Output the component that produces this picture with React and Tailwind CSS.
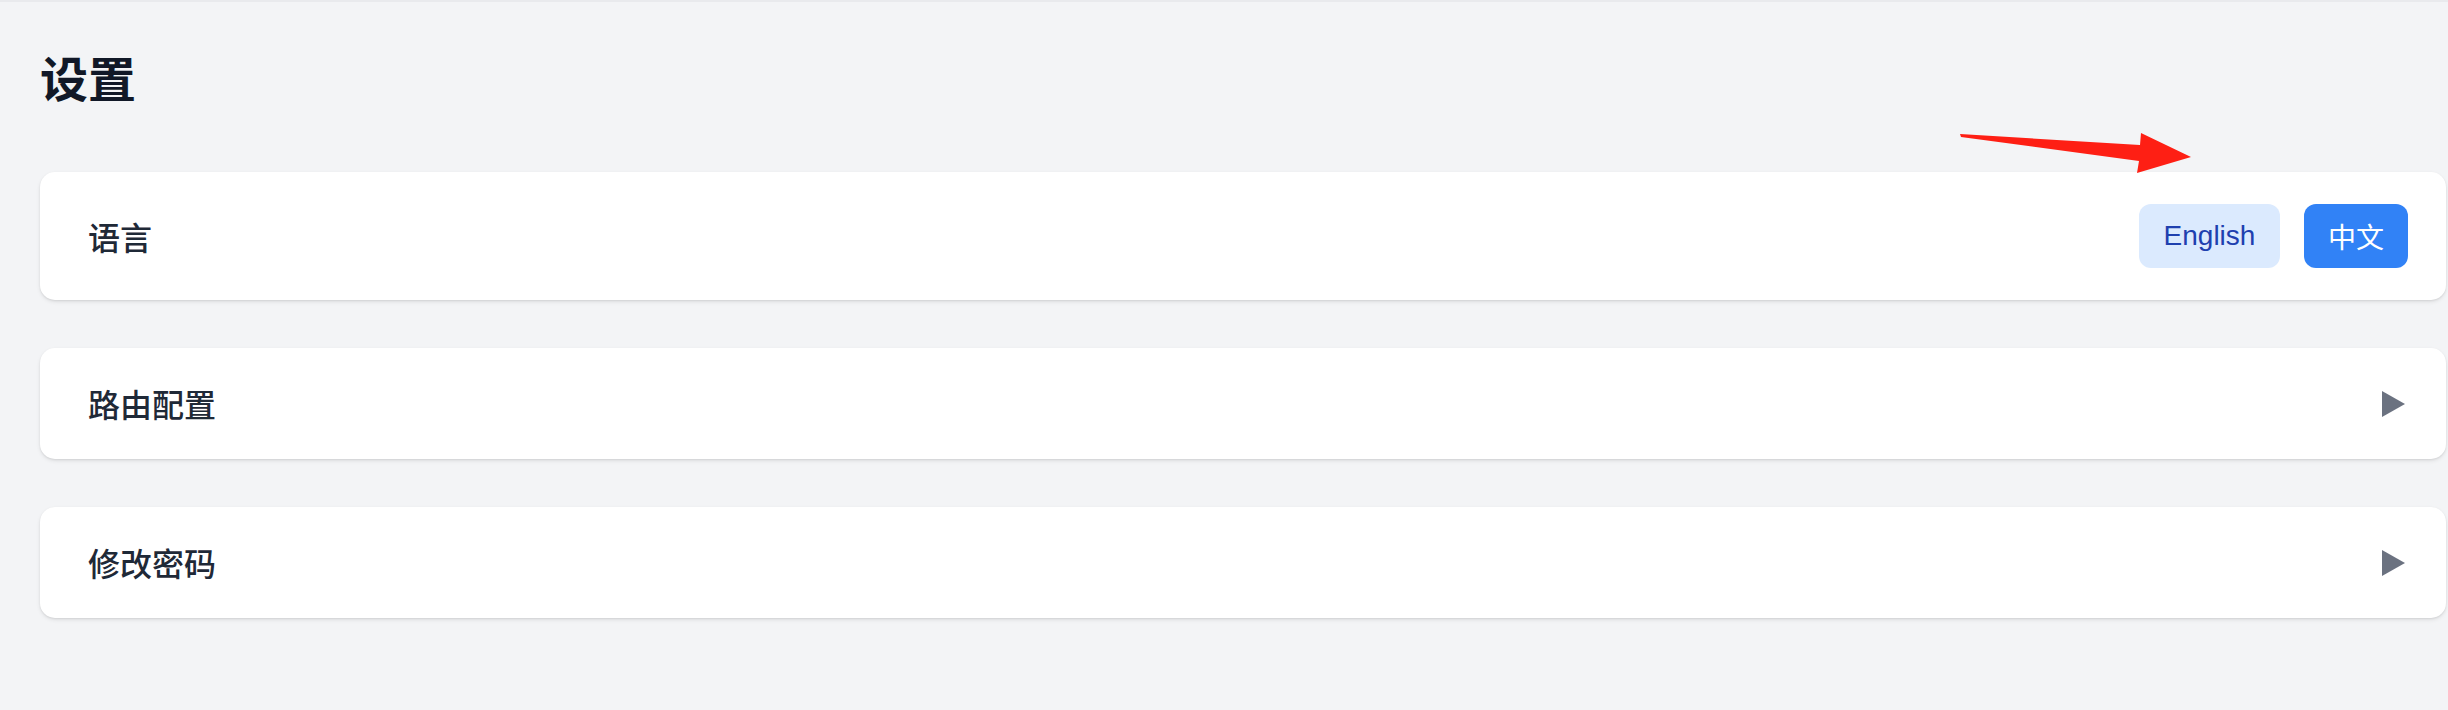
import React, { useState } from 'react'

const cjk = "font-['Noto_Sans_CJK_SC','Noto_Sans',sans-serif]"

function Arrow() {
    return (
        <svg className="absolute left-[1958px] top-[128px] w-[236px] h-[48px]" viewBox="0 0 236 48">
            <polygon fill="#fe1f14" points="2,4 182,15 183,3 233,27 179,43 181,31 3,7" />
        </svg>
    )
}

function Caret() {
    return (
        <svg className="w-[23px] h-[26px] mr-[3px]" viewBox="0 0 23 26">
            <polygon fill="#6b7280" points="0,0 23,13 0,26" />
        </svg>
    )
}

function Card({ children }) {
    return (
        <div className="flex items-center justify-between bg-white rounded-[15px] pl-[48px] pr-[38px] py-[32px] shadow-[0_1px_2px_rgba(0,0,0,0.08),0_2px_4px_rgba(0,0,0,0.08)]">
            {children}
        </div>
    )
}

function Label({ text }) {
    return <div className={`${cjk} text-[32px] leading-[47px] font-medium text-[#1f2937]`}>{text}</div>
}

export default function App() {
    const [lang, setLang] = useState("zh")
    return (
        <div className={`relative min-h-[710px] bg-[#f3f4f6] border-t-2 border-[#e9eaed] pl-[40px] pr-[2px] pt-[50px] ${cjk}`}>
            <h1 className="text-[48px] leading-[48px] font-bold text-[#111827] mb-[72px]">设置</h1>

            <div className="flex flex-col gap-[48px]">
                <Card>
                    <Label text="语言" />
                    <div className="flex gap-[24px]">
                        <button
                            onClick={() => setLang("en")}
                            className={`h-[64px] w-[141px] rounded-[12px] text-[28px] font-['Liberation_Sans','Noto_Sans_CJK_SC',sans-serif] ${lang === "en" ? "bg-[#3182f6] text-white" : "bg-[#dbeafe] text-[#1e40af]"}`}
                        >
                            English
                        </button>
                        <button
                            onClick={() => setLang("zh")}
                            className={`h-[64px] w-[104px] rounded-[12px] text-[28px] ${cjk} ${lang === "zh" ? "bg-[#3182f6] text-white" : "bg-[#dbeafe] text-[#1e40af]"}`}
                        >
                            中文
                        </button>
                    </div>
                </Card>

                <Card>
                    <Label text="路由配置" />
                    <Caret />
                </Card>

                <Card>
                    <Label text="修改密码" />
                    <Caret />
                </Card>
            </div>

            <Arrow />
        </div>
    )
}
